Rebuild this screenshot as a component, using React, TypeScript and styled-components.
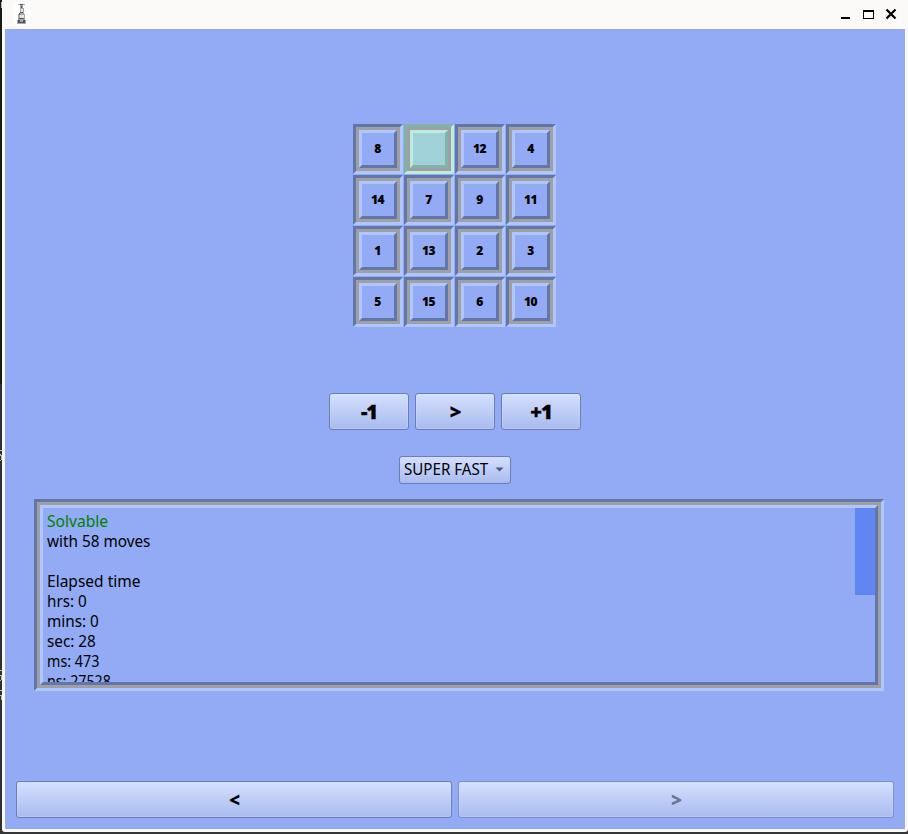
import React from "react";
import styled, { createGlobalStyle } from "styled-components";

const GlobalStyle = createGlobalStyle`
  * { box-sizing: border-box; }
  html, body { margin: 0; padding: 0; overflow: hidden; background: #343638; }
  button { margin: 0; font: inherit; }
`;

const Desktop = styled.div`
  width: 908px;
  height: 834px;
  display: grid;
  grid-template-columns: 2px 906px;
  grid-template-rows: 832px 2px;
  background: #343638;
  overflow: hidden;
`;

const Backdrop = styled.svg`
  display: block;
  width: 2px;
  height: 832px;
`;

const Window = styled.main`
  display: flex;
  flex-direction: column;
  padding: 0 3px 3px;
  background: #fbfaf8;
  border-radius: 0 0 3px 3px;
`;

const TitleBar = styled.header`
  flex: none;
  height: 29px;
  display: flex;
  justify-content: space-between;
`;

const TitleIcon = styled.svg`
  display: block;
  width: 17px;
  height: 22px;
  margin: 3px 0 0 8px;
`;

const WindowControls = styled.svg`
  display: block;
  width: 64px;
  height: 29px;
`;

const Content = styled.section`
  flex: 1;
  display: flex;
  flex-direction: column;
  align-items: center;
  padding-top: 95px;
  background: #92abf4;
`;

const Board = styled.div`
  display: grid;
  grid-template-columns: repeat(4, 50px);
  grid-auto-rows: 50px;
  gap: 1px;
  margin-right: 1px;
`;

const lightEdge = "#b0c6ff";
const darkEdge = "#6277a8";

const Tile = styled.div<{ $blank?: boolean }>`
  border: 3px solid;
  border-color: ${(p) =>
    p.$blank ? "#83b2a9 #b9eedd #b9eedd #83b2a9" : `${darkEdge} ${lightEdge} ${lightEdge} ${darkEdge}`};
  background: #a0a0a4;
  padding: 3px;
`;

const TileFace = styled.div<{ $blank?: boolean }>`
  height: 38px;
  display: flex;
  align-items: center;
  justify-content: center;
  padding-right: 1px;
  border: 3px solid;
  border-color: ${(p) =>
    p.$blank ? "#b9eedd #83b2a9 #83b2a9 #b9eedd" : `${lightEdge} ${darkEdge} ${darkEdge} ${lightEdge}`};
  background: ${(p) => (p.$blank ? "#a0d1d9" : "#92abf4")};
  font: 800 12px/14px "Open Sans", sans-serif;
  letter-spacing: -0.6px;
  color: #000;
`;

const Stepper = styled.div`
  display: flex;
  gap: 6px;
  margin-top: 66px;
`;

const PushButton = styled.button<{ $wide?: boolean }>`
  width: ${(p) => (p.$wide ? "436px" : "80px")};
  height: 37px;
  padding: 0;
  display: flex;
  align-items: center;
  justify-content: center;
  border: 1px solid #687eb4;
  border-radius: 3px;
  background: linear-gradient(#d5e0ff, #a9bbee);
  box-shadow: inset 0 0 0 1px rgba(220, 230, 255, 0.3);
  color: #000;
  &:disabled { color: #6c7690; border-color: #7c91c9; }
`;

const Caption = styled.span`
  font: 800 19px/20px "Open Sans", sans-serif;
  letter-spacing: -1px;
`;

const StepCaption = styled(Caption)`
  font-size: 20px;
  -webkit-text-stroke: 0.3px #000;
`;

const SpeedSelect = styled.button`
  width: 112px;
  height: 28px;
  margin-top: 26px;
  padding: 0 6px 2px 4px;
  display: flex;
  align-items: center;
  justify-content: space-between;
  border: 1px solid #687eb4;
  border-radius: 3px;
  background: linear-gradient(#d5e0ff, #a9bbee);
  color: #000;
`;

const SpeedLabel = styled.span`
  width: 84px;
  text-align: left;
  white-space: nowrap;
  font: 16px/20px "Noto Sans", sans-serif;
  transform: scaleX(0.945);
  transform-origin: left;
`;

const Arrow = styled.svg`
  display: block;
  flex: none;
  width: 9px;
  height: 5px;
  margin-top: 1px;
`;

const LogFrame = styled.div`
  width: 850px;
  height: 192px;
  margin: 15px 0 0 8px;
  padding: 3px;
  border: 3px solid;
  border-color: ${darkEdge} ${lightEdge} ${lightEdge} ${darkEdge};
  background: #a0a0a4;
`;

const LogView = styled.div`
  height: 180px;
  display: flex;
  justify-content: space-between;
  overflow: hidden;
  border: 3px solid;
  border-color: ${lightEdge} ${darkEdge} ${darkEdge} ${lightEdge};
  background: #92abf4;
`;

const LogText = styled.div`
  padding: 3px 0 0 4px;
  font: 16px/20px "Noto Sans", sans-serif;
  white-space: nowrap;
`;

const LogLine = styled.div<{ $stretch: number; $ok?: boolean }>`
  height: 20px;
  color: ${(p) => (p.$ok ? "#008000" : "#000")};
  transform: scaleX(${(p) => p.$stretch});
  transform-origin: left;
`;

const ScrollThumb = styled.div`
  width: 20px;
  height: 87px;
  background: #6086f4;
`;

const Navigation = styled.nav`
  display: flex;
  gap: 6px;
  margin-top: 90px;
`;

const tiles = [8, null, 12, 4, 14, 7, 9, 11, 1, 13, 2, 3, 5, 15, 6, 10];

const logLines = [
  { text: "Solvable", stretch: 0.974, ok: true },
  { text: "with 58 moves", stretch: 0.956 },
  { text: "", stretch: 1 },
  { text: "Elapsed time", stretch: 0.97 },
  { text: "hrs: 0", stretch: 0.95 },
  { text: "mins: 0", stretch: 0.955 },
  { text: "sec: 28", stretch: 0.955 },
  { text: "ms: 473", stretch: 0.895 },
  { text: "ns: 27528", stretch: 0.89 },
];

export default function App() {
  return (
    <>
      <GlobalStyle />
      <Desktop>
        <Backdrop viewBox="0 0 2 832" shapeRendering="crispEdges">
          <path fill="#191919" d="M0 0h2v384H0z" />
          <path fill="#302f36" d="M0 384h2v448H0z" />
          <path fill="#b9b9bd" d="M1 2h1v6H1zM0 450h2v1H0zM0 454h1v2H0zM0 455h2v1H0zM1 456h1v4H1zM0 460h1v1H0zM0 670h2v1H0zM0 675h2v1H0zM1 676h1v4H1zM0 680h1v1H0zM0 690h2v1H0zM0 695h2v1H0zM1 696h1v4H1z" />
        </Backdrop>
        <Window>
          <TitleBar>
            <TitleIcon viewBox="0 0 17 22">
              <path fill="#fff" d="M0 0h17v22H0z" />
              <path fill="#a3a7a8" d="M5 1h7v1H5zM7 2h3v3H7zM7 5h4v5H7zM6 10h5v1H6zM5 11h7v6H5zM4 17h9v4H4z" />
              <path fill="#dfe4e6" d="M8 6h2v3H8zM7 12h4v3H7z" />
              <path fill="#505657" d="M7 1h3v1H7zM8 3h1v2H8zM7 9h3v1H7zM6 10h1v2H6zM6 15h5v1H6zM5 17h2v3H5zM10 17h2v3h-2zM7 19h3v1H7z" />
            </TitleIcon>
            <WindowControls viewBox="841 0 64 29">
              <path d="M840 17h10v2h-10z" fill="#000" shapeRendering="crispEdges" />
              <path d="M863 10h11v9h-11zM864 12v6h9v-6z" fill="#000" fillRule="evenodd" shapeRendering="crispEdges" />
              <path d="M886.5 9.5l9 9M895.5 9.5l-9 9" stroke="#000" strokeWidth="2.2" />
            </WindowControls>
          </TitleBar>
          <Content>
            <Board>
              {tiles.map((value, index) => (
                <Tile key={index} $blank={value === null}>
                  <TileFace $blank={value === null}>{value}</TileFace>
                </Tile>
              ))}
            </Board>
            <Stepper>
              <PushButton><StepCaption>-1</StepCaption></PushButton>
              <PushButton><StepCaption>&gt;</StepCaption></PushButton>
              <PushButton><StepCaption>+1</StepCaption></PushButton>
            </Stepper>
            <SpeedSelect>
              <SpeedLabel>SUPER FAST</SpeedLabel>
              <Arrow viewBox="0 0 9 5"><path d="M.5.5h8l-4 4z" fill="#4b5878" /></Arrow>
            </SpeedSelect>
            <LogFrame>
              <LogView>
                <LogText>
                  {logLines.map((line, index) => (
                    <LogLine key={index} $stretch={line.stretch} $ok={line.ok}>{line.text}</LogLine>
                  ))}
                </LogText>
                <ScrollThumb />
              </LogView>
            </LogFrame>
            <Navigation>
              <PushButton $wide><Caption>&lt;</Caption></PushButton>
              <PushButton $wide disabled><Caption>&gt;</Caption></PushButton>
            </Navigation>
          </Content>
        </Window>
      </Desktop>
    </>
  );
}
